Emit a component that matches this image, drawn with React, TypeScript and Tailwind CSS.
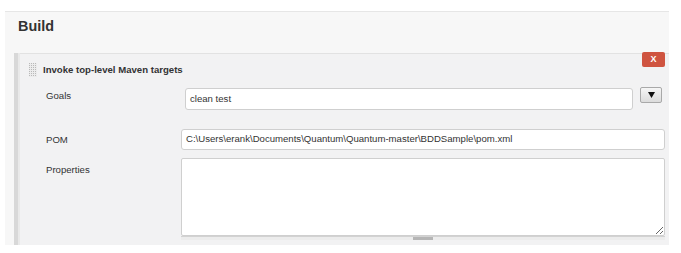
const pomPath = "C:\\Users\\erank\\Documents\\Quantum\\Quantum-master\\BDDSample\\pom.xml";

function DragHandle() {
  const dots = [];
  for (let r = 0; r < 7; r++) {
    for (let c = 0; c < 4; c++) {
      dots.push(<rect key={`${r}-${c}`} x={c * 2} y={r * 2} width="1" height="1" fill="#b9b9b9" />);
    }
  }
  return (
    <svg width="8" height="14" viewBox="0 0 8 14" className="shrink-0">
      <rect width="8" height="14" fill="#ececec" />
      {dots}
    </svg>
  );
}

export default function App() {
  return (
    <div className="w-[681px] h-[253px] bg-white pt-[11px] pl-[5px] font-['Liberation_Sans',Arial,sans-serif] text-[#333]">
      <div className="w-[664px] h-[234px] bg-[#f7f7f7] border-t border-[#e6e6e6]">
        <h2 className="pl-[13px] pt-[7px] text-[14.4px] leading-[15px] font-bold text-[#333]">Build</h2>

        <div className="ml-[9px] mt-[19px] flex h-[192px]">
          <div className="w-[4px] bg-[#d8d8d8]" />
          <div className="w-[2px] bg-[#e9e9e9]" />
          <div className="relative flex-1 bg-[#f2f2f3] border-t border-[#e2e2e2]">
            <button className="absolute right-[4px] top-[-2px] w-[23px] h-[15px] rounded-[2px] bg-[#cf5440] text-white text-[9px] font-bold leading-[15px] text-center">
              X
            </button>

            <div className="flex items-center gap-[6px] pl-[9px] pt-[9px]">
              <DragHandle />
              <span className="text-[9.6px] leading-[12px] font-bold text-[#333]">Invoke top-level Maven targets</span>
            </div>

            {/* Goals */}
            <div className="mt-[11px] flex items-start">
              <div className="w-[161px] pl-[26px] pt-[2px] text-[9.6px] leading-[12px]">Goals</div>
              <div className="ml-[4px] w-[448px] h-[22px] bg-white border border-[#cfcfcf] rounded-[3px] px-[4px] flex items-center text-[9.6px]">
                clean test
              </div>
              <button className="ml-[7px] mt-[-1px] w-[22px] h-[16px] rounded-[2px] border border-[#a9a9a9] bg-gradient-to-b from-[#f6f6f6] to-[#dcdcdc] flex items-center justify-center">
                <svg width="7" height="6" viewBox="0 0 7 6">
                  <path d="M0 0 H7 L3.5 6 Z" fill="#111" />
                </svg>
              </button>
            </div>

            {/* POM */}
            <div className="mt-[19px] flex items-start">
              <div className="w-[161px] pl-[26px] pt-[5px] text-[9.6px] leading-[12px]">POM</div>
              <div className="w-[484px] h-[21px] bg-white border border-[#cfcfcf] rounded-[3px] px-[4px] flex items-center text-[9.6px] whitespace-nowrap">
                {pomPath}
              </div>
            </div>

            {/* Properties */}
            <div className="mt-[8px] flex items-start">
              <div className="w-[161px] pl-[26px] pt-[6px] text-[9.6px] leading-[12px]">Properties</div>
              <div className="w-[484px] flex flex-col">
                <textarea className="block w-[484px] h-[78px] bg-white border border-[#cfcfcf] rounded-[2px] resize-y outline-none" />
                <div className="h-[4px] w-full bg-[#ececec] border-t border-[#d2d2d2] flex justify-center">
                  <div className="w-[20px] h-[3px] bg-[#b5b5b5]" />
                </div>
              </div>
            </div>
          </div>
        </div>
      </div>
    </div>
  );
}
